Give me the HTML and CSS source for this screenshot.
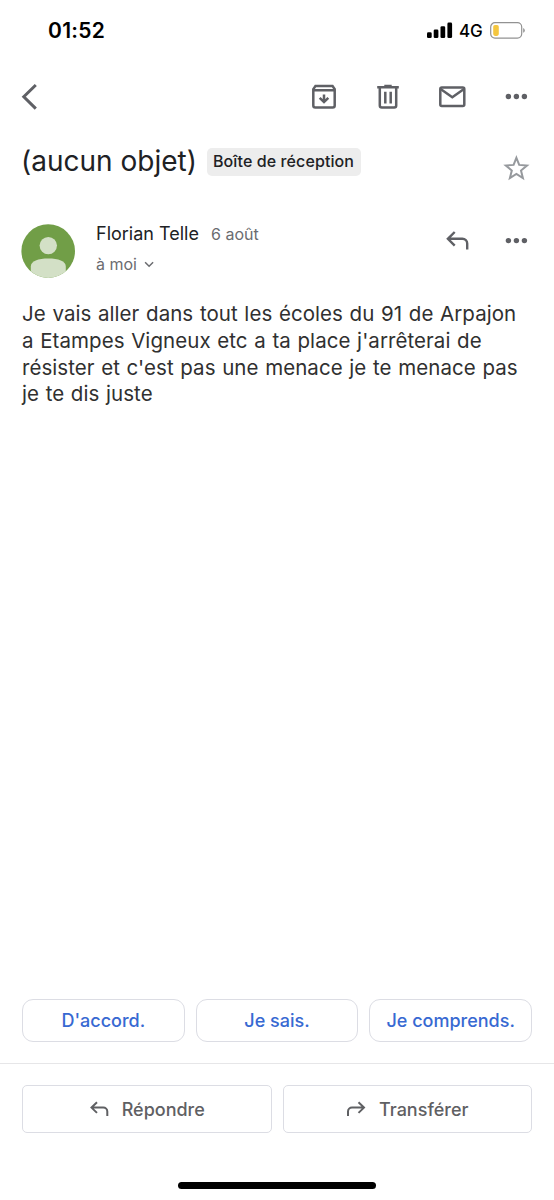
FILE: index.html
```html
<!DOCTYPE html>
<html lang="fr">
<head>
<meta charset="utf-8">
<title>(aucun objet)</title>
<link rel="stylesheet" href="styles.css">
</head>
<body>
<div class="screen">
  <header class="status">
    <span class="time">01:52</span>
    <div class="indicators">
      <svg class="signal" width="26" height="17" viewBox="0 0 26 17"><rect x="0" y="10.2" width="4.7" height="5.8" rx="1.3"/><rect x="6.7" y="7.4" width="4.7" height="8.6" rx="1.3"/><rect x="13.5" y="4.2" width="4.7" height="11.8" rx="1.3"/><rect x="20.4" y="0.6" width="4.7" height="15.4" rx="1.3"/></svg>
      <span class="network">4G</span>
      <svg width="36" height="17" viewBox="0 0 36 17"><rect x=".7" y=".7" width="31" height="15.4" rx="4.3" fill="none" stroke="#929292" stroke-width="1.2"/><rect x="3.2" y="2.9" width="5.6" height="11" rx="1.8" fill="#f4c63f"/><path d="M33.2 6q1.6.8 1.6 2.4t-1.6 2.4z" fill="#929292"/></svg>
    </div>
  </header>

  <nav class="toolbar">
    <svg class="back" width="18" height="28" viewBox="0 0 18 28"><path d="M15.8 2 3.8 13.8l12 11.8"/></svg>
    <div class="actions">
      <svg width="28" height="28" viewBox="0 0 28 28"><path d="M3.3 6.1 5.5 3h17l2.2 3.1v16.4a2 2 0 0 1-2 2H5.3a2 2 0 0 1-2-2zM3.3 7.3h21.4M14 11.5v7.6M9.7 14.8l4.3 4.3 4.3-4.3"/></svg>
      <svg width="28" height="28" viewBox="0 0 28 28"><path d="M3.2 4.3h21.6M10.3 3h7.4M5.8 4.3v18.2a2 2 0 0 0 2 2h12.4a2 2 0 0 0 2-2V4.3M11.3 8.7v11.7M16.7 8.7v11.7"/></svg>
      <svg width="28" height="28" viewBox="0 0 28 28"><rect x="2.3" y="4.4" width="24" height="18.6" rx="1.5"/><path d="m2.6 6 11.7 8.2L26 6"/></svg>
      <svg class="dots" width="28" height="28" viewBox="0 0 28 28"><circle cx="6.4" cy="13.5" r="2.7"/><circle cx="14.4" cy="13.5" r="2.7"/><circle cx="22.4" cy="13.5" r="2.7"/></svg>
    </div>
  </nav>

  <section class="subject">
    <h1>(aucun objet)</h1>
    <span class="label">Boîte de réception</span>
    <svg class="star" width="28" height="28" viewBox="0 0 28 28"><path d="m14.4 3.8 2.8 7.1 7.8.6-6 5 1.9 7.6-6.5-4.1-6.5 4.1 1.9-7.6-6-5 7.8-.6z"/></svg>
  </section>

  <section class="sender">
    <svg class="avatar" width="54" height="54" viewBox="0 0 54 54"><defs><clipPath id="disc"><circle cx="27.2" cy="27.1" r="26.8"/></clipPath></defs><g clip-path="url(#disc)"><path fill="#719e47" d="M0 0h54v54H0z"/><circle cx="27.3" cy="21.6" r="8.7" fill="#d3e0c6"/><path fill="#d3e0c6" d="M9.8 54V42.5C9.8 37 17.3 34.5 27.3 34.5S44.8 37 44.8 42.5V54z"/></g></svg>
    <div class="who">
      <div class="from"><span class="name">Florian Telle</span><span class="date">6 août</span></div>
      <div class="to"><span class="recipient">à moi</span><svg width="11" height="8" viewBox="0 0 11 8"><path d="m1.1 2.3 4 4 4-4"/></svg></div>
    </div>
    <div class="sender-actions">
      <svg width="28" height="28" viewBox="0 0 28 28"><path d="m13.7 5-6.8 6.8 6.800 6.800M6.900 11.800h14.500a4.800 4.800 0 0 1 4.800 4.800v6"/></svg>
      <svg class="dots" width="28" height="28" viewBox="0 0 28 28"><circle cx="6.400" cy="13.600" r="2.700"/><circle cx="14.400" cy="13.600" r="2.700"/><circle cx="22.400" cy="13.600" r="2.700"/></svg>
    </div>
  </section>

  <main class="message">Je vais aller dans tout les écoles du 91 de Arpajon<br>a Etampes Vigneux etc a ta place j'arrêterai de<br>résister et c'est pas une menace je te menace pas<br>je te dis juste</main>

  <div class="suggestions">
    <button>D'accord.</button>
    <button>Je sais.</button>
    <button>Je comprends.</button>
  </div>
  <footer class="replies">
    <button><svg width="20" height="18" viewBox="0 0 20 18"><path d="M8 2.300 2.500 7.600 8 12.900M2.500 7.600h11.800a4 4 0 0 1 4 4V16"/></svg><span>Répondre</span></button>
    <button><svg width="20" height="18" viewBox="0 0 20 18"><path d="m12.500 2.300 5.500 5.300-5.500 5.300M18 7.600H6a4 4 0 0 0-4 4V16"/></svg><span>Transférer</span></button>
  </footer>
  <div class="home"></div>
</div>
</body>
</html>
```
FILE: styles.css
```css
* { box-sizing: border-box; }
body { margin: 0; background: #fff; font-family: Inter, "Liberation Sans", sans-serif; color: #202124; }
svg { display: block; flex: none; fill: none; }
span, h1, .message { white-space: nowrap; }

.screen { display: flex; flex-direction: column; width: 554px; height: 1200px; overflow: hidden; }

.status { display: flex; justify-content: space-between; align-items: center; height: 60px; padding: 0 28px 0 48px; color: #000; }
.time { padding-top: 1px; font-size: 21px; font-weight: 600; letter-spacing: 0.3px; }
.indicators { display: flex; align-items: center; }
.signal { fill: #000; }
.network { width: 24px; margin: 1px 7px 0 6px; font-size: 17px; font-weight: 500; letter-spacing: -0.2px; }

.toolbar { display: flex; justify-content: space-between; align-items: center; height: 73px; padding: 0 24px 0 20px; }
.toolbar svg, .sender-actions svg { stroke: #5f6065; stroke-width: 2.5; }
.toolbar .back { stroke-width: 3; }
.actions { display: flex; gap: 36px; }
.toolbar .dots, .sender-actions .dots { fill: #5f6065; stroke: none; }

.subject { display: flex; height: 91px; padding: 12px 24px 0 21px; }
h1 { width: 175px; margin: 0 11px 0 0; font-size: 28px; line-height: 32px; font-weight: 400; letter-spacing: 0; }
.label { height: 27.5px; width: 153.5px; margin-top: 3px; padding: 0 6px; border-radius: 5px; background: #ededed; font-size: 16px; line-height: 27px; font-weight: 500; letter-spacing: 0.1px; }
.star { margin: 9px 0 0 auto; stroke: #96999d; stroke-width: 2; }

.sender { display: flex; height: 77px; padding: 0 24px 0 21px; }
.avatar { margin-right: 21px; }
.from { display: flex; align-items: flex-start; gap: 12px; height: 30px; line-height: 20px; }
.name { width: 103px; font-size: 18px; }
.date { font-size: 16px; color: #6b6c70; }
.to { display: flex; align-items: center; gap: 7px; height: 20px; font-size: 16px; color: #6b6c70; }
.to svg { stroke: #6b6c70; stroke-width: 1.5; }
.sender-actions { display: flex; gap: 33px; margin: 3px 0 0 auto; }
.sender-actions svg { stroke-width: 2.4; }

.message { flex: 1; padding-left: 22px; font-size: 20.5px; line-height: 26.8px; letter-spacing: 0.06px; word-spacing: 0.8px; color: #303030; }

button { display: flex; flex: 1 1 0; align-items: center; justify-content: center; padding: 0; border: 1.5px solid #dcdde4; background: #fff; font-family: inherit; font-size: 18px; font-weight: 500; white-space: nowrap; }
.suggestions { display: flex; gap: 11px; height: 65px; padding: 0 22px 21px; border-bottom: 1px solid #e6e6e8; }
.suggestions button { border-radius: 11px; color: #3769d2; }
.replies { display: flex; gap: 11px; height: 69px; padding: 21px 22px 0; }
.replies button { gap: 13px; border-radius: 5px; color: #5f6063; }
.replies svg { stroke: #5f6063; stroke-width: 2; }
.home { flex: none; width: 198px; height: 7px; margin: 49px auto 11px; border-radius: 4px; background: #000; }
```
